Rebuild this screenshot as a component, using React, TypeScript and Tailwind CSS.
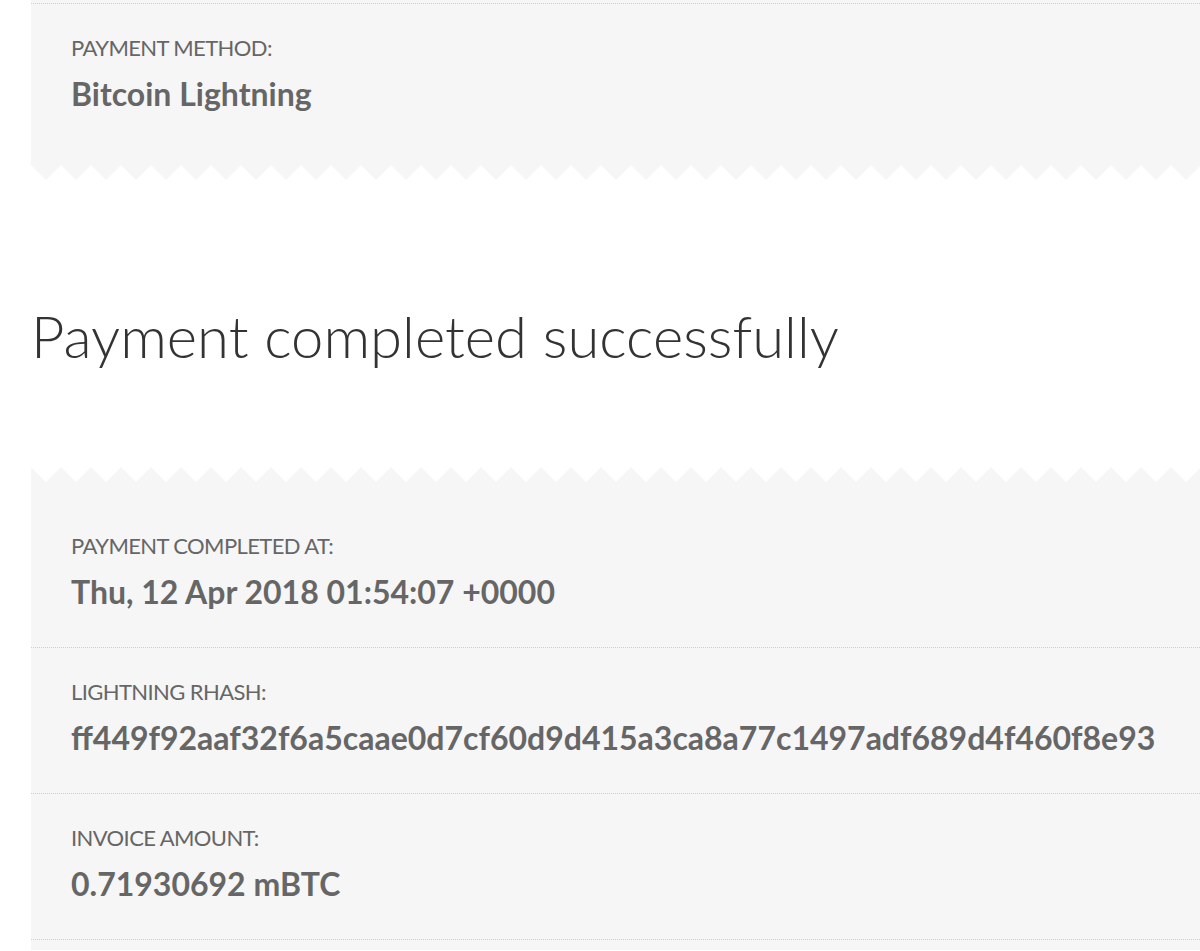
function Zigzag({ id, fill, className }: { id: string; fill: string; className: string }) {
  return (
    <svg className={className} width="100%" height="15" preserveAspectRatio="none">
      <defs>
        <pattern id={id} width="30" height="15" patternUnits="userSpaceOnUse">
          <polygon points="0,0 30,0 15,15" fill={fill} />
        </pattern>
      </defs>
      <rect width="100%" height="15" fill={`url(#${id})`} />
    </svg>
  );
}

function Row({ label, value, border = true }: { label: string; value: string; border?: boolean }) {
  return (
    <div className={border ? 'border-t border-dotted border-[#cfcfcf] px-10 pt-8 pb-[39px]' : 'px-10 pt-8 pb-[39px] border-t border-transparent'}>
      <p className="text-[22px] leading-[24px] tracking-[-0.6px] text-[#666]">{label}</p>
      <p className="mt-[18px] text-[32px] leading-[32px] font-bold text-[#666]">{value}</p>
    </div>
  );
}

export default function App() {
  return (
    <div className="min-h-screen bg-white font-['Lato',sans-serif] overflow-hidden">
      <div className="pl-[31px]">
        <section className="bg-[#f6f6f6] pt-[3px] pb-4">
          <Row label="PAYMENT METHOD:" value="Bitcoin Lightning" />
        </section>
        <Zigzag id="zz-bottom" fill="#f6f6f6" className="block bg-white" />

        <h1 className="mt-[127px] mb-[102px] text-[58px] leading-[58px] font-light text-[#333]">
          Payment completed successfully
        </h1>

        <Zigzag id="zz-top" fill="#ffffff" className="block bg-[#f6f6f6]" />
        <section className="bg-[#f6f6f6] pt-[19px]">
          <Row label="PAYMENT COMPLETED AT:" value="Thu, 12 Apr 2018 01:54:07 +0000" border={false} />
          <Row label="LIGHTNING RHASH:" value="ff449f92aaf32f6a5caae0d7cf60d9d415a3ca8a77c1497adf689d4f460f8e93" />
          <Row label="INVOICE AMOUNT:" value="0.71930692 mBTC" />
          <div className="border-t border-dotted border-[#cfcfcf] h-[11px]" />
        </section>
      </div>
    </div>
  );
}
